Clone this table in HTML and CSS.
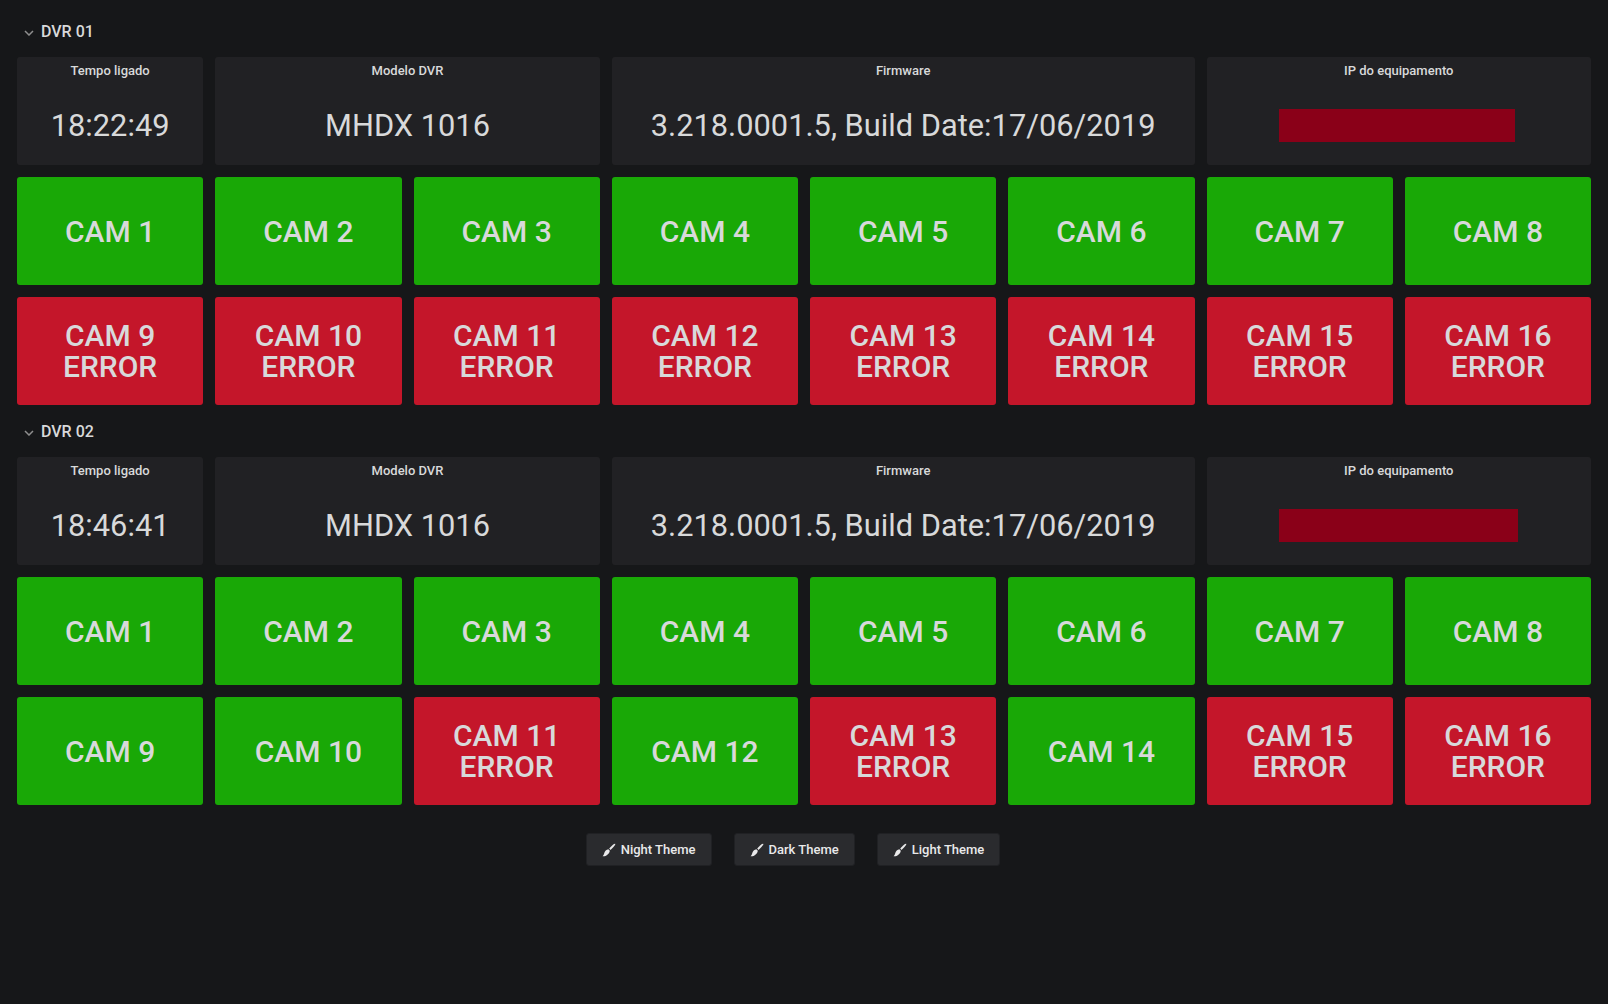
FILE: index.html
```html
<!DOCTYPE html>
<html lang="pt">
<head>
<meta charset="utf-8">
<title>DVR</title>
<link rel="stylesheet" href="styles.css">
</head>
<body>
<main class="page">
  <section class="dvr">
    <div class="row-head"><svg class="chev" viewBox="0 0 10 6" width="10" height="6"><path d="M1 1 L5 5 L9 1" fill="none" stroke="currentColor" stroke-width="1.5"/></svg><span>DVR 01</span></div>
    <div class="grid">
      <div class="panel s1"><div class="ptitle">Tempo ligado</div><div class="pval">18:22:49</div></div>
      <div class="panel s2"><div class="ptitle">Modelo DVR</div><div class="pval">MHDX 1016</div></div>
      <div class="panel s3"><div class="ptitle">Firmware</div><div class="pval">3.218.0001.5, Build Date:17/06/2019</div></div>
      <div class="panel s2"><div class="ptitle">IP do equipamento</div><div class="pval"><div class="ipbar"></div></div></div>
      <div class="cam ok">CAM 1</div>
      <div class="cam ok">CAM 2</div>
      <div class="cam ok">CAM 3</div>
      <div class="cam ok">CAM 4</div>
      <div class="cam ok">CAM 5</div>
      <div class="cam ok">CAM 6</div>
      <div class="cam ok">CAM 7</div>
      <div class="cam ok">CAM 8</div>
      <div class="cam err"><span class="ln">CAM 9</span><span class="ln">ERROR</span></div>
      <div class="cam err"><span class="ln">CAM 10</span><span class="ln">ERROR</span></div>
      <div class="cam err"><span class="ln">CAM 11</span><span class="ln">ERROR</span></div>
      <div class="cam err"><span class="ln">CAM 12</span><span class="ln">ERROR</span></div>
      <div class="cam err"><span class="ln">CAM 13</span><span class="ln">ERROR</span></div>
      <div class="cam err"><span class="ln">CAM 14</span><span class="ln">ERROR</span></div>
      <div class="cam err"><span class="ln">CAM 15</span><span class="ln">ERROR</span></div>
      <div class="cam err"><span class="ln">CAM 16</span><span class="ln">ERROR</span></div>
    </div>
  </section>
  <section class="dvr">
    <div class="row-head"><svg class="chev" viewBox="0 0 10 6" width="10" height="6"><path d="M1 1 L5 5 L9 1" fill="none" stroke="currentColor" stroke-width="1.5"/></svg><span>DVR 02</span></div>
    <div class="grid">
      <div class="panel s1"><div class="ptitle">Tempo ligado</div><div class="pval">18:46:41</div></div>
      <div class="panel s2"><div class="ptitle">Modelo DVR</div><div class="pval">MHDX 1016</div></div>
      <div class="panel s3"><div class="ptitle">Firmware</div><div class="pval">3.218.0001.5, Build Date:17/06/2019</div></div>
      <div class="panel s2"><div class="ptitle">IP do equipamento</div><div class="pval"><div class="ipbar wide"></div></div></div>
      <div class="cam ok">CAM 1</div>
      <div class="cam ok">CAM 2</div>
      <div class="cam ok">CAM 3</div>
      <div class="cam ok">CAM 4</div>
      <div class="cam ok">CAM 5</div>
      <div class="cam ok">CAM 6</div>
      <div class="cam ok">CAM 7</div>
      <div class="cam ok">CAM 8</div>
      <div class="cam ok">CAM 9</div>
      <div class="cam ok">CAM 10</div>
      <div class="cam err"><span class="ln">CAM 11</span><span class="ln">ERROR</span></div>
      <div class="cam ok">CAM 12</div>
      <div class="cam err"><span class="ln">CAM 13</span><span class="ln">ERROR</span></div>
      <div class="cam ok">CAM 14</div>
      <div class="cam err"><span class="ln">CAM 15</span><span class="ln">ERROR</span></div>
      <div class="cam err"><span class="ln">CAM 16</span><span class="ln">ERROR</span></div>
    </div>
  </section>
  <div class="themes">
    <button class="tbtn"><svg class="brush" viewBox="0 0 14 14" width="14" height="14"><path d="M13.2 0.8 C12.6 0.4 11.6 1 9.6 3 L7.2 5.6 L8.5 6.9 L11 4.4 C13 2.4 13.6 1.3 13.2 0.8 Z" fill="currentColor"/><path d="M6.4 6.3 L7.8 7.7 C7.6 9.6 6.2 11.4 4.4 12.4 C3 13.1 1.4 13.3 0.6 13.2 C1.6 12.4 1.9 11.4 2.3 10.1 C2.8 8.2 4.3 6.6 6.4 6.3 Z" fill="currentColor"/></svg>Night Theme</button>
    <button class="tbtn"><svg class="brush" viewBox="0 0 14 14" width="14" height="14"><path d="M13.2 0.8 C12.6 0.4 11.6 1 9.6 3 L7.2 5.6 L8.5 6.9 L11 4.4 C13 2.4 13.6 1.3 13.2 0.8 Z" fill="currentColor"/><path d="M6.4 6.3 L7.8 7.7 C7.6 9.6 6.2 11.4 4.4 12.4 C3 13.1 1.4 13.3 0.6 13.2 C1.6 12.4 1.9 11.4 2.3 10.1 C2.8 8.2 4.3 6.6 6.4 6.3 Z" fill="currentColor"/></svg>Dark Theme</button>
    <button class="tbtn"><svg class="brush" viewBox="0 0 14 14" width="14" height="14"><path d="M13.2 0.8 C12.6 0.4 11.6 1 9.6 3 L7.2 5.6 L8.5 6.9 L11 4.4 C13 2.4 13.6 1.3 13.2 0.8 Z" fill="currentColor"/><path d="M6.4 6.3 L7.8 7.7 C7.6 9.6 6.2 11.4 4.4 12.4 C3 13.1 1.4 13.3 0.6 13.2 C1.6 12.4 1.9 11.4 2.3 10.1 C2.8 8.2 4.3 6.6 6.4 6.3 Z" fill="currentColor"/></svg>Light Theme</button>
  </div>
</main>
</body>
</html>
```

FILE: styles.css
```css
html, body {
  margin: 0;
  padding: 0;
  background: #161719;
  color: #d8d9da;
  font-family: Roboto, "Noto Sans", "Liberation Sans", sans-serif;
}
.page {
  padding: 5px 17px 0 17px;
  min-height: 1004px;
  box-sizing: border-box;
}
.row-head {
  height: 40px;
  margin: 6px 0;
  display: flex;
  align-items: center;
  font-size: 16px;
  font-weight: 500;
  color: #d8d9da;
}
.chev {
  color: #8e8e8e;
  margin: 3px 7px 0 7px;
}
.grid {
  display: grid;
  grid-template-columns: repeat(8, 1fr);
  grid-auto-rows: 108px;
  gap: 12px;
}
.panel {
  background: #212124;
  border-radius: 3px;
  display: flex;
  flex-direction: column;
}
.s1 { grid-column: span 1; }
.s2 { grid-column: span 2; }
.s3 { grid-column: span 3; }
.ptitle {
  height: 28px;
  line-height: 28px;
  text-align: center;
  font-size: 13px;
  font-weight: 500;
}
.pval {
  flex: 1;
  display: flex;
  align-items: center;
  justify-content: center;
  font-size: 30.8px;
  font-weight: 400;
  padding-top: 1px;
  white-space: nowrap;
}
.ipbar {
  width: 236px;
  height: 33px;
  background: #8a0018;
  margin-right: 4px;
}
.ipbar.wide {
  width: 239px;
  margin-right: 1px;
}
.cam {
  border-radius: 3px;
  display: flex;
  flex-direction: column;
  align-items: center;
  justify-content: center;
  text-align: center;
  font-size: 30px;
  font-weight: 500;
  line-height: 31px;
  color: #d8d9da;
}
.ln {
  display: block;
  height: 31px;
}
.ok { background: #19a806; }
.err { background: #c4162a; }
.themes {
  margin-top: 28px;
  text-align: center;
  font-size: 0;
}
.tbtn {
  display: inline-flex;
  align-items: center;
  height: 33px;
  margin: 0 22px 0 0;
  padding: 0 15px 0 15px;
  background: #2a2b2e;
  border: 1px solid #202124;
  border-radius: 3px;
  color: #e9e9ea;
  font-family: Roboto, "Noto Sans", sans-serif;
  font-size: 13px;
  font-weight: 500;
  box-sizing: border-box;
}
.brush {
  margin-right: 5px;
  color: #e9e9ea;
}
```
